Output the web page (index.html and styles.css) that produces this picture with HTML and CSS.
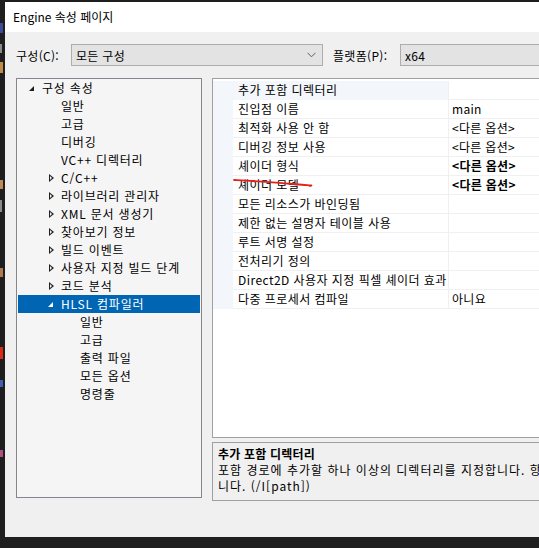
FILE: index.html
```html
<!DOCTYPE html>
<html lang="ko">
<head>
<meta charset="utf-8">
<title>Engine 속성 페이지</title>
<link rel="stylesheet" href="styles.css">
</head>
<body>
<div class="screen">
  <div class="editor-strip">
    <span class="mark m1"></span><span class="mark m2"></span><span class="mark m3"></span><span class="mark m4"></span><span class="mark m5"></span><span class="mark m6"></span><span class="mark red"></span><span class="mark m7"></span><span class="mark m8"></span>
  </div>
  <div class="window">
    <div class="titlebar">Engine 속성 페이지</div>
    <div class="client">
      <div class="config-row">
        <span class="lbl">구성(C):</span>
        <div class="combo combo-config">
          <span>모든 구성</span>
          <svg class="chev" width="9" height="6" viewBox="0 0 9 6"><path d="M0.5 0.8 L4.5 4.8 L8.5 0.8" fill="none" stroke="#5c5c66" stroke-width="1"/></svg>
        </div>
        <span class="lbl lbl-plat">플랫폼(P):</span>
        <div class="combo combo-plat"><span>x64</span></div>
      </div>
      <div class="main">
        <div class="tree">
          <div class="node l0"><span class="tri exp"></span><span>구성 속성</span></div>
          <div class="node l1"><span class="tri"></span><span>일반</span></div>
          <div class="node l1"><span class="tri"></span><span>고급</span></div>
          <div class="node l1"><span class="tri"></span><span>디버깅</span></div>
          <div class="node l1"><span class="tri"></span><span>VC++ 디렉터리</span></div>
          <div class="node l1"><span class="tri col"></span><span>C/C++</span></div>
          <div class="node l1"><span class="tri col"></span><span>라이브러리 관리자</span></div>
          <div class="node l1"><span class="tri col"></span><span>XML 문서 생성기</span></div>
          <div class="node l1"><span class="tri col"></span><span>찾아보기 정보</span></div>
          <div class="node l1"><span class="tri col"></span><span>빌드 이벤트</span></div>
          <div class="node l1"><span class="tri col"></span><span>사용자 지정 빌드 단계</span></div>
          <div class="node l1"><span class="tri col"></span><span>코드 분석</span></div>
          <div class="node l1 sel"><span class="tri exp"></span><span>HLSL 컴파일러</span></div>
          <div class="node l2"><span class="tri"></span><span>일반</span></div>
          <div class="node l2"><span class="tri"></span><span>고급</span></div>
          <div class="node l2"><span class="tri"></span><span>출력 파일</span></div>
          <div class="node l2"><span class="tri"></span><span>모든 옵션</span></div>
          <div class="node l2"><span class="tri"></span><span>명령줄</span></div>
        </div>
        <div class="right">
          <div class="grid">
            <div class="prow cur"><div class="pname">추가 포함 디렉터리</div><div class="pval"></div></div>
            <div class="prow"><div class="pname">진입점 이름</div><div class="pval">main</div></div>
            <div class="prow"><div class="pname">최적화 사용 안 함</div><div class="pval">&lt;다른 옵션&gt;</div></div>
            <div class="prow"><div class="pname">디버깅 정보 사용</div><div class="pval">&lt;다른 옵션&gt;</div></div>
            <div class="prow"><div class="pname">셰이더 형식</div><div class="pval b">&lt;다른 옵션&gt;</div></div>
            <div class="prow"><div class="pname">셰이더 모델</div><div class="pval b">&lt;다른 옵션&gt;</div></div>
            <div class="prow"><div class="pname">모든 리소스가 바인딩됨</div><div class="pval"></div></div>
            <div class="prow"><div class="pname">제한 없는 설명자 테이블 사용</div><div class="pval"></div></div>
            <div class="prow"><div class="pname">루트 서명 설정</div><div class="pval"></div></div>
            <div class="prow"><div class="pname">전처리기 정의</div><div class="pval"></div></div>
            <div class="prow"><div class="pname">Direct2D 사용자 지정 픽셀 셰이더 효과</div><div class="pval"></div></div>
            <div class="prow"><div class="pname">다중 프로세서 컴파일</div><div class="pval">아니요</div></div>
            <svg class="scribble" width="90" height="12" viewBox="0 0 90 12"><path d="M1 3 C 20 4, 40 5, 60 7 S 80 8, 77 9" fill="none" stroke="#e3201b" stroke-width="1.8" stroke-linecap="round"/></svg>
          </div>
          <div class="desc">
            <div class="desc-title">추가 포함 디렉터리</div>
            <div class="desc-line">포함 경로에 추가할 하나 이상의 디렉터리를 지정합니다. 항</div>
            <div class="desc-line">니다. (/I[path])</div>
          </div>
        </div>
      </div>
    </div>
  </div>
  <div class="taskbar"></div>
</div>
</body>
</html>
```

FILE: styles.css
```css
html, body {
  margin: 0;
  padding: 0;
}
body {
  background: #1e1e1e;
  font-family: "Noto Sans CJK KR", "Noto Sans", sans-serif;
  font-size: 12px;
  color: #000;
}
.screen {
  position: relative;
  width: 539px;
  height: 548px;
  overflow: hidden;
  display: grid;
  grid-template-columns: 5px 1fr;
  grid-template-rows: 1fr 11px;
}
.editor-strip {
  background: #1e1e1e;
  position: relative;
}
.mark {
  position: absolute;
  left: 0;
  width: 3px;
  height: 9px;
}
.m1 { top: 23px; height: 10px; background: #3c4a9a; }
.m2 { top: 44px; background: #8a8a8a; width: 2px; }
.m3 { top: 62px; height: 11px; background: #c08a48; }
.m4 { top: 180px; background: #c08a58; }
.m5 { top: 200px; height: 12px; background: #8a8a8a; width: 2px; }
.m6 { top: 268px; background: #b07a50; }
.red { top: 347px; height: 12px; background: #d82a16; }
.m7 { top: 380px; height: 7px; background: #3f5fb0; }
.m8 { top: 450px; height: 7px; background: #b05080; }
.taskbar {
  grid-column: 1 / 3;
  background: #1f1f1f;
}
.window {
  margin-top: 2px;
  width: 620px;
  display: flex;
  flex-direction: column;
  background: #f0f0f0;
}
.titlebar {
  height: 30px;
  background: #ffffff;
  line-height: 30px;
  padding-left: 8px;
  font-size: 12px;
}
.client {
  flex: 1;
  padding: 12px 0 0 11px;
}
.config-row {
  display: flex;
  align-items: center;
  height: 22px;
  letter-spacing: 0.3px;
}
.lbl {
  width: 55px;
}
.lbl-plat {
  width: 67px;
  margin-left: 10px;
}
.combo {
  box-sizing: border-box;
  height: 22px;
  background: #e3e3e3;
  border: 1px solid #adadad;
  display: flex;
  align-items: center;
  padding-left: 4px;
}
.combo-config {
  width: 252px;
  justify-content: space-between;
  padding-right: 6px;
}
.combo-plat {
  width: 200px;
}
.main {
  display: grid;
  grid-template-columns: 186px 1fr;
  column-gap: 10px;
  margin-top: 12px;
}
.tree {
  box-sizing: border-box;
  height: 420px;
  background: #f5f5f5;
  border: 1px solid #828790;
  padding: 0 0 0 1px;
  letter-spacing: 0.8px;
}
.node {
  height: 18px;
  line-height: 18px;
  display: flex;
  align-items: center;
  white-space: nowrap;
}
.node.l0 { padding-left: 10px; }
.node.l1 { padding-left: 29px; }
.node.l2 { padding-left: 48px; }
.node.sel {
  background: #0066b4;
  color: #fff;
  margin-right: 1px;
}
.tri {
  width: 14px;
  height: 18px;
  flex: none;
  position: relative;
}
.tri.exp::before {
  content: "";
  position: absolute;
  left: 1px;
  top: 7px;
  width: 0;
  height: 0;
  border-left: 5px solid transparent;
  border-bottom: 5px solid #1e1e1e;
}
.sel .tri.exp::before {
  border-bottom-color: #ffffff;
}
.tri.col::before {
  content: "";
  position: absolute;
  left: 2px;
  top: 5px;
  width: 0;
  height: 0;
  border-top: 4px solid transparent;
  border-bottom: 4px solid transparent;
  border-left: 5px solid #1e1e1e;
}
.tri.col::after {
  content: "";
  position: absolute;
  left: 3px;
  top: 7px;
  width: 0;
  height: 0;
  border-top: 2px solid transparent;
  border-bottom: 2px solid transparent;
  border-left: 2px solid #f5f5f5;
}
.right {
  display: flex;
  flex-direction: column;
  gap: 4px;
}
.grid {
  position: relative;
  box-sizing: border-box;
  height: 360px;
  background: #ffffff;
  border: 1px solid #a0a0a0;
  padding-top: 2px;
}
.prow {
  display: grid;
  grid-template-columns: 20px 216px 1fr;
  height: 19px;
  font-size: 12px;
  letter-spacing: 0.45px;
}
.prow::before {
  content: "";
  background: #f3f6fb;
}
.pname, .pval {
  box-sizing: border-box;
  border-bottom: 1px solid #f0f0f0;
  line-height: 18px;
  padding-left: 5px;
  white-space: nowrap;
  overflow: hidden;
}
.pname {
  border-right: 1px solid #f0f0f0;
}
.pval {
  padding-left: 3px;
  letter-spacing: 0.3px;
}
.pval.b {
  font-weight: bold;
}
.prow.cur .pname {
  background: #f3f6fb;
  border-bottom-color: #f3f6fb;
}
.scribble {
  position: absolute;
  left: 20px;
  top: 98px;
}
.desc {
  box-sizing: border-box;
  height: 59px;
  border: 1px solid #a0a0a0;
  padding: 2px 0 0 5px;
  background: #f0f0f0;
}
.desc-title {
  font-weight: bold;
  font-size: 12px;
  line-height: 17px;
  letter-spacing: 0.2px;
}
.desc-line {
  line-height: 16px;
  white-space: nowrap;
  letter-spacing: 1px;
}
```
